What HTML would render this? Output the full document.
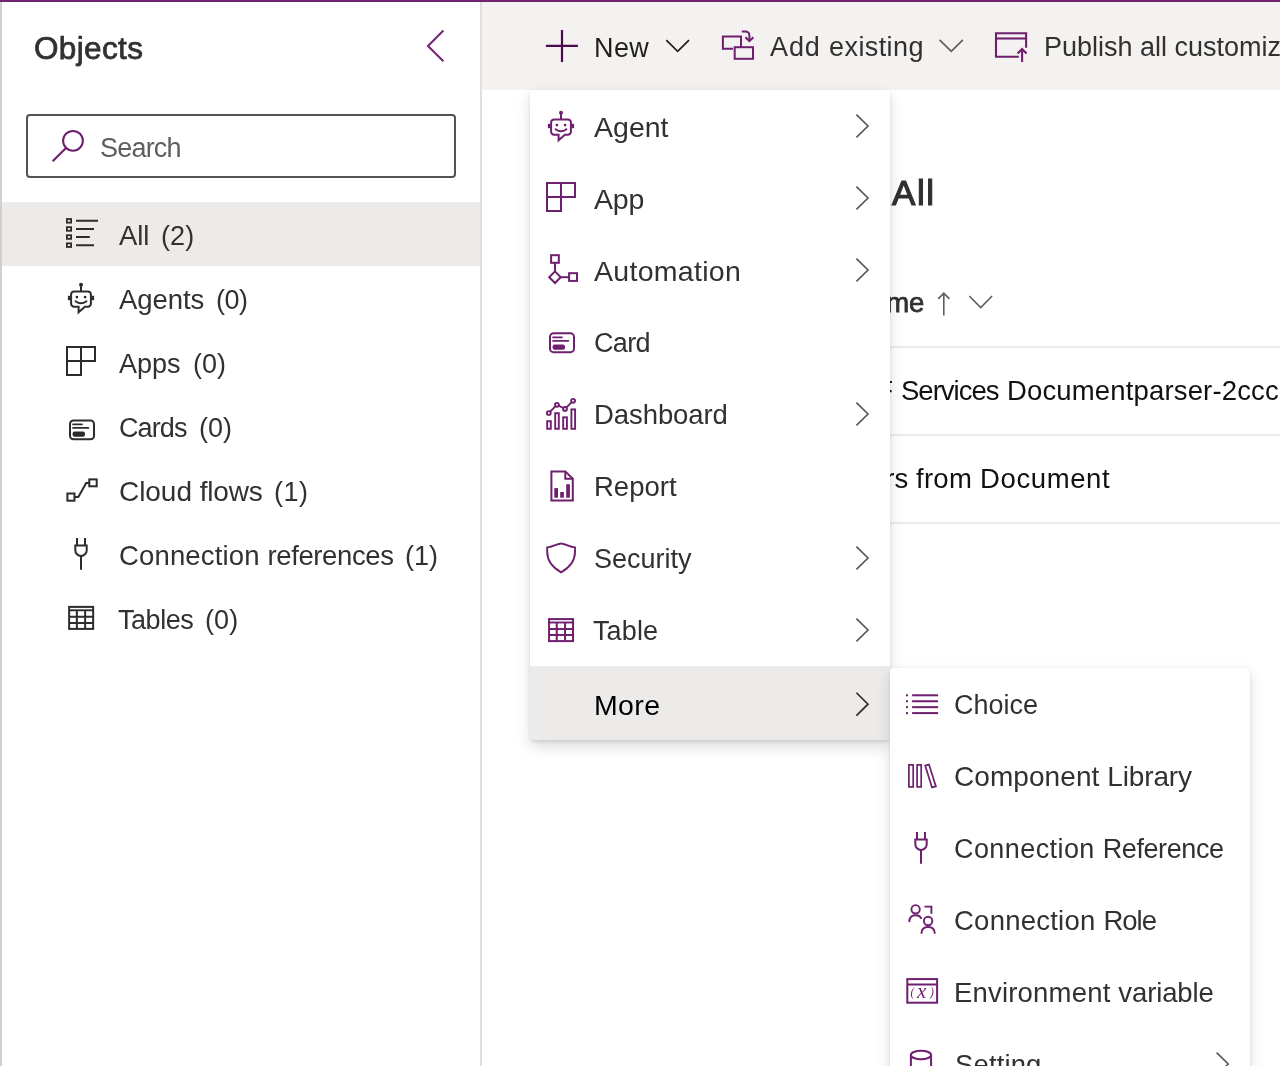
<!DOCTYPE html>
<html lang="en">
<head>
<meta charset="utf-8">
<title>Objects</title>
<style>
html,body{margin:0;padding:0;}
body{width:1280px;height:1066px;overflow:hidden;background:#fff;position:relative;
  font-family:"Liberation Sans",sans-serif;color:#323130;font-size:27px;}
*{box-sizing:border-box;}
svg{position:absolute;overflow:visible;}
.topbar{position:absolute;left:0;top:0;width:1280px;height:2px;background:linear-gradient(#762a76,#6a196a);z-index:50;}
.leftedge{position:absolute;left:0;top:2px;width:2px;height:1064px;background:#d2d0ce;}
.sidebar{position:absolute;left:2px;top:2px;width:480px;height:1064px;background:#fff;border-right:2px solid #e1dfdd;}
.toolbar{position:absolute;left:482px;top:2px;width:798px;height:88px;background:#f3f2f1;overflow:hidden;}
.content{position:absolute;left:482px;top:90px;width:798px;height:976px;background:#fff;overflow:hidden;}
.t{position:absolute;white-space:pre;line-height:32px;height:32px;will-change:transform;}
.search{position:absolute;left:24px;top:112px;width:430px;height:64px;border:2px solid #55534f;border-radius:4px;background:#fff;}
.navsel{position:absolute;left:0;top:200px;width:478px;height:64px;background:#edebe9;}
.nav{list-style:none;margin:0;padding:0;}
.nav li{margin:0;padding:0;}
.menu{position:absolute;background:#fff;box-shadow:0 6.4px 14.4px rgba(0,0,0,.132),0 1.2px 3.6px rgba(0,0,0,.108);border-radius:4px;}
.menu ul{list-style:none;margin:0;padding:0;}
.hl{position:absolute;background:#edebe9;}
.rowline{position:absolute;left:64px;width:734px;height:2px;background:#edebe9;}
.cnt{color:#323130;}
</style>
</head>
<body>
<div class="topbar"></div>
<div class="leftedge"></div>

<div class="sidebar">
<span class="t title" style="left:32.06px;top:29.89px;font-size:31.5px;font-weight:400;-webkit-text-stroke:0.75px;letter-spacing:0.36px;">Objects</span>
<svg width="32" height="40" viewBox="420 26 32 40" style="left:418px;top:24px;"><path d="M443.4 30.6 L428 45.9 L443.4 61.2" fill="none" stroke="#742774" stroke-width="2.1"/></svg>
<div class="search">
<svg width="40" height="40" viewBox="48 126 40 40" style="left:20px;top:10px;"><circle cx="73" cy="140.8" r="9.9" fill="none" stroke="#6e1f6e" stroke-width="2"/><path d="M66 147.9 L52.6 161.2" stroke="#6e1f6e" stroke-width="2.1" fill="none"/></svg>
<span class="t" style="left:72.25px;top:15.54px;color:#605e5c;letter-spacing:-0.8px;">Search</span>
</div>
<div class="navsel"></div>
<ul class="nav">
<li><svg width="36" height="36" viewBox="64 216 36 36" style="left:62px;top:214px;"><g fill="none" stroke="#2d2c2b" stroke-width="2"><rect x="66.9" y="219.05" width="4.2" height="3.6" stroke-width="1.8"/><rect x="66.9" y="227.15" width="4.2" height="3.6" stroke-width="1.8"/><rect x="66.9" y="235.25" width="4.2" height="3.6" stroke-width="1.8"/><rect x="66.9" y="243.35" width="4.2" height="3.6" stroke-width="1.8"/><path d="M76 220.85 H98 M76 228.95 H94 M76 237.05 H89.8 M76 245.15 H94"/></g></svg><span class="t" style="left:116.75px;top:217.67px;font-size:27.5px;letter-spacing:-0.08px;">All</span><span class="t cnt" style="left:159.30px;top:217.84px;letter-spacing:0.1px;">(2)</span></li>
<li><svg width="36" height="36" viewBox="64 280 36 36" style="left:62px;top:278px;"><g transform="translate(81 298)" fill="none" stroke="#2d2c2b" stroke-width="2"><circle cx="0" cy="-13.3" r="2" fill="#2d2c2b" stroke="none"/><path d="M0 -13 V-6.6"/><path d="M-6.9 -6.6 H6.9 a3 3 0 0 1 3 3 V5.7 a3 3 0 0 1 -3 3 H3.9 L-2.4 14.2 V8.7 H-6.9 a3 3 0 0 1 -3 -3 V-3.6 a3 3 0 0 1 3 -3 Z" stroke-linejoin="miter"/><rect x="-13.1" y="-2.2" width="2.6" height="4.4" fill="#2d2c2b" stroke="none"/><rect x="10.5" y="-2.2" width="2.6" height="4.4" fill="#2d2c2b" stroke="none"/><circle cx="-4.1" cy="-0.9" r="1.35" fill="#2d2c2b" stroke="none"/><circle cx="4.1" cy="-0.9" r="1.35" fill="#2d2c2b" stroke="none"/><path d="M-5.4 3.2 Q0 7.4 5.4 3.2" stroke-width="1.9" stroke-linecap="round"/></g></svg><span class="t" style="left:116.75px;top:281.67px;font-size:27.5px;letter-spacing:-0.07px;">Agents</span><span class="t cnt" style="left:214.00px;top:281.84px;letter-spacing:-0.5px;">(0)</span></li>
<li><svg width="36" height="36" viewBox="64 344 36 36" style="left:62px;top:342px;"><g transform="translate(81 361)" fill="none" stroke="#2d2c2b" stroke-width="2"><path d="M-14 -14 H14 V0 H0 V14 H-14 Z M0 -14 V0 M-14 0 H0"/></g></svg><span class="t" style="left:116.75px;top:345.84px;letter-spacing:-0.02px;">Apps</span><span class="t cnt" style="left:190.50px;top:345.84px;letter-spacing:-0.05px;">(0)</span></li>
<li><svg width="36" height="36" viewBox="64 408 36 36" style="left:62px;top:406px;"><g transform="translate(82 429.8)" fill="none" stroke="#2d2c2b" stroke-width="2"><rect x="-12" y="-9.4" width="24" height="18.8" rx="3.5"/><path d="M-9 -5.4 H0" stroke-width="1.7" stroke-linecap="round"/><path d="M-9 -1.9 H6.4" stroke-width="1.7" stroke-linecap="round"/><rect x="-9.4" y="1.8" width="12.4" height="5.2" rx="2" fill="#2d2c2b" stroke="none"/></g></svg><span class="t" style="left:116.50px;top:409.84px;letter-spacing:-0.88px;">Cards</span><span class="t cnt" style="left:196.80px;top:409.84px;letter-spacing:-0.05px;">(0)</span></li>
<li><svg width="36" height="36" viewBox="64 472 36 36" style="left:62px;top:470px;"><g fill="none" stroke="#2d2c2b" stroke-width="2"><rect x="67.4" y="493.5" width="7.1" height="7.2"/><rect x="89.3" y="479.4" width="7.4" height="6.9"/><path d="M74.5 497 H78.3 L86.2 483 H89.3"/></g></svg><span class="t" style="left:116.50px;top:473.50px;font-size:28px;letter-spacing:-0.05px;">Cloud <span style="letter-spacing:-0.15px;">flows</span></span><span class="t cnt" style="left:271.60px;top:473.84px;letter-spacing:0.5px;">(1)</span></li>
<li><svg width="36" height="36" viewBox="64 536 36 36" style="left:62px;top:534px;"><g transform="translate(81 538)" fill="none" stroke="#2d2c2b" stroke-width="2"><path d="M-4 0 V7.4 M4 0 V7.4"/><path d="M-5.7 7.4 H5.7 V12.2 a5.7 5.7 0 0 1 -11.4 0 Z"/><path d="M0 17.9 V31.7"/></g></svg><span class="t" style="left:116.50px;top:537.67px;font-size:27.5px;letter-spacing:0.15px;">Connection <span style="letter-spacing:-0.37px;">references</span></span><span class="t cnt" style="left:403.40px;top:537.84px;letter-spacing:0.05px;">(1)</span></li>
<li><svg width="36" height="36" viewBox="64 600 36 36" style="left:62px;top:598px;"><g transform="translate(81.15 617.9)" fill="none" stroke="#2d2c2b" stroke-width="2"><rect x="-12" y="-11" width="24" height="22"/><path d="M-12 -7.6 H12" stroke-width="1.9"/><path d="M-12 -1.2 H12 M-12 5 H12 M-4.3 -7.6 V11 M4 -7.6 V11"/></g></svg><span class="t" style="left:115.75px;top:601.84px;letter-spacing:-0.45px;">Tables</span><span class="t cnt" style="left:203.00px;top:601.84px;letter-spacing:0.12px;">(0)</span></li>
</ul>
</div>
<div class="toolbar">
<svg width="36" height="36" viewBox="544 28 36 36" style="left:62px;top:26px;"><path d="M545.9 45.9 H577.9 M562 30 V61.9" fill="none" stroke="#4b0c4f" stroke-width="2.2"/></svg>
<span class="t" style="left:112.25px;top:29.54px;color:#201f1e;letter-spacing:0.38px;">New</span>
<svg width="28" height="20" viewBox="664 36 28 20" style="left:182px;top:34px;"><path d="M666.3 40.2 L677.65 51.3 L689 40.2" fill="none" stroke="#201f1e" stroke-width="1.7"/></svg>
<svg width="36" height="34" viewBox="720 28 36 34" style="left:238px;top:26px;"><g fill="none" stroke="#6e1f6e" stroke-width="2"><path d="M741 47 V36.6 H722.9 V48.8 H733"/><rect x="734.7" y="47.2" width="18.3" height="11.6"/><path d="M741.8 31.4 H745.4 a4 4 0 0 1 4 4 V40.6"/><path d="M745.4 37.2 L749.4 41.2 L753.4 37.2"/></g></svg>
<span class="t" style="left:288.30px;top:29.34px;letter-spacing:0.88px;">Add <span style="letter-spacing:0.40px;">existing</span></span>
<svg width="30" height="20" viewBox="936 36 30 20" style="left:454px;top:34px;"><path d="M939.6 39.9 L951.25 51.4 L962.9 39.9" fill="none" stroke="#605e5c" stroke-width="1.7"/></svg>
<svg width="36" height="34" viewBox="994 30 36 34" style="left:512px;top:28px;"><g fill="none" stroke="#6e1f6e" stroke-width="2.1"><path d="M1018.8 56.8 H996 V33.2 H1026.1 V47.7"/><path d="M996 38.5 H1026.1"/><path d="M1022.1 61.9 V49.4 M1017.6 53.5 L1022.1 48.9 L1026.6 53.5"/></g></svg>
<span class="t" style="left:561.60px;top:29.34px;">Publish all customizations</span>
</div>
<div class="content">
<span class="t" style="left:410.40px;top:86.87px;font-size:35px;font-weight:400;-webkit-text-stroke:1.15px;letter-spacing:1.6px;line-height:40px;height:40px;margin-top:-4px;">All</span>
<span class="t" style="left:368.90px;top:196.77px;font-size:27.5px;font-weight:400;-webkit-text-stroke:0.75px;">Name</span>
<svg width="64" height="32" viewBox="934 288 64 32" style="left:452px;top:198px;"><path d="M943.8 315.5 V293.2 M938.2 298.9 L943.8 293.2 L949.4 298.9" fill="none" stroke="#605e5c" stroke-width="1.6"/><path d="M969.3 296 L980.7 307.5 L992.1 296" fill="none" stroke="#605e5c" stroke-width="1.6"/></svg>
<div class="rowline" style="top:256px;"></div>
<div class="rowline" style="top:344px;"></div>
<div class="rowline" style="top:432px;"></div>
<span class="t" style="left:269.00px;top:285.17px;font-size:27.5px;color:#111;">Adobe PDF</span>
<span class="t" style="left:418.70px;top:285.17px;font-size:27.5px;color:#111;letter-spacing:-0.99px;">Services </span>
<span class="t" style="left:525.00px;top:285.17px;font-size:27.5px;color:#111;letter-spacing:0.15px;">Documentparser-2ccce</span>
<span class="t" style="left:229.00px;top:373.27px;font-size:27.5px;color:#111;">Extract Headers</span>
<span class="t" style="left:434.10px;top:373.27px;font-size:27.5px;color:#111;letter-spacing:0.28px;">from <span style="letter-spacing:0.60px;">Document</span></span>
</div>
<div class="menu" style="left:530px;top:90px;width:360px;height:650px;">
<div class="hl" style="left:0;top:576px;width:360px;height:74px;border-radius:0 0 4px 4px;"></div>
<ul>
<li><svg width="36" height="40" viewBox="544 106 36 40" style="left:14px;top:16px;"><g transform="translate(561 126)" fill="none" stroke="#6e1f6e" stroke-width="2"><circle cx="0" cy="-13.3" r="2" fill="#6e1f6e" stroke="none"/><path d="M0 -13 V-6.6"/><path d="M-6.9 -6.6 H6.9 a3 3 0 0 1 3 3 V5.7 a3 3 0 0 1 -3 3 H3.9 L-2.4 14.2 V8.7 H-6.9 a3 3 0 0 1 -3 -3 V-3.6 a3 3 0 0 1 3 -3 Z" stroke-linejoin="miter"/><rect x="-13.1" y="-2.2" width="2.6" height="4.4" fill="#6e1f6e" stroke="none"/><rect x="10.5" y="-2.2" width="2.6" height="4.4" fill="#6e1f6e" stroke="none"/><circle cx="-4.1" cy="-0.9" r="1.35" fill="#6e1f6e" stroke="none"/><circle cx="4.1" cy="-0.9" r="1.35" fill="#6e1f6e" stroke="none"/><path d="M-5.4 3.2 Q0 7.4 5.4 3.2" stroke-width="1.9" stroke-linecap="round"/></g></svg><span class="t" style="left:64.06px;top:20.87px;font-size:28.5px;letter-spacing:0.01px;">Agent</span><svg width="20" height="28" viewBox="852 112 20 28" style="left:322px;top:22px;"><path d="M856.4 114.6 L868.0 126 L856.4 137.4" fill="none" stroke="#5d5b58" stroke-width="1.7"/></svg></li>
<li><svg width="36" height="40" viewBox="544 178 36 40" style="left:14px;top:88px;"><g transform="translate(561 196.9)" fill="none" stroke="#6e1f6e" stroke-width="2"><path d="M-14 -14 H14 V0 H0 V14 H-14 Z M0 -14 V0 M-14 0 H0"/></g></svg><span class="t" style="left:64.40px;top:92.87px;font-size:28.5px;letter-spacing:-0.15px;">App</span><svg width="20" height="28" viewBox="852 184 20 28" style="left:322px;top:94px;"><path d="M856.4 186.6 L868.0 198 L856.4 209.4" fill="none" stroke="#5d5b58" stroke-width="1.7"/></svg></li>
<li><svg width="36" height="40" viewBox="544 250 36 40" style="left:14px;top:160px;"><g fill="none" stroke="#6e1f6e" stroke-width="2"><rect x="551.1" y="255.2" width="7.7" height="7.6"/><path d="M555 262.8 V271.4"/><path d="M555 271.4 L560.7 277.2 L555 283 L549.2 277.2 Z"/><path d="M560.7 277.2 H569.1"/><rect x="569.1" y="273.2" width="7.9" height="7.7"/></g></svg><span class="t" style="left:64.40px;top:164.87px;font-size:28.5px;letter-spacing:0.29px;">Automation</span><svg width="20" height="28" viewBox="852 256 20 28" style="left:322px;top:166px;"><path d="M856.4 258.6 L868.0 270 L856.4 281.4" fill="none" stroke="#5d5b58" stroke-width="1.7"/></svg></li>
<li><svg width="36" height="40" viewBox="544 322 36 40" style="left:14px;top:232px;"><g transform="translate(562 342.75)" fill="none" stroke="#6e1f6e" stroke-width="2"><rect x="-12" y="-9.4" width="24" height="18.8" rx="3.5"/><path d="M-9 -5.4 H0" stroke-width="1.7" stroke-linecap="round"/><path d="M-9 -1.9 H6.4" stroke-width="1.7" stroke-linecap="round"/><rect x="-9.4" y="1.8" width="12.4" height="5.2" rx="2" fill="#6e1f6e" stroke="none"/></g></svg><span class="t" style="left:64.30px;top:237.39px;letter-spacing:-0.63px;">Card</span></li>
<li><svg width="36" height="40" viewBox="544 394 36 40" style="left:14px;top:304px;"><g fill="none" stroke="#6e1f6e" stroke-width="1.9"><rect x="547.2" y="421.2" width="3.6" height="7.6"/><rect x="555.2" y="413.2" width="3.6" height="15.6"/><rect x="563.2" y="417.3" width="3.7" height="11.5"/><rect x="571.4" y="409.4" width="3.7" height="19.4"/><circle cx="548.8" cy="413" r="1.9"/><circle cx="556.9" cy="404.8" r="1.9"/><circle cx="565" cy="408.9" r="1.9"/><circle cx="573.1" cy="400.8" r="1.9"/><path d="M550.2 411.6 L555.5 406.2 M558.7 405.7 L563.2 408 M566.5 407.4 L571.7 402.2"/></g></svg><span class="t" style="left:63.90px;top:309.22px;font-size:27.5px;letter-spacing:-0.08px;">Dashboard</span><svg width="20" height="28" viewBox="852 400 20 28" style="left:322px;top:310px;"><path d="M856.4 402.6 L868.0 414 L856.4 425.4" fill="none" stroke="#5d5b58" stroke-width="1.7"/></svg></li>
<li><svg width="36" height="40" viewBox="544 466 36 40" style="left:14px;top:376px;"><g fill="none" stroke="#6e1f6e" stroke-width="2"><path d="M565.3 471.4 H551.4 V500.6 H572.8 V478.7 Z"/><path d="M565.3 471.4 V478.7 H572.8"/></g><g fill="#6e1f6e"><rect x="554.3" y="488.1" width="3.7" height="9.6"/><rect x="560.2" y="492" width="3.7" height="5.7"/><rect x="566.2" y="484.2" width="3.7" height="13.5"/></g></svg><span class="t" style="left:63.90px;top:381.22px;font-size:27.5px;letter-spacing:0.0px;">Report</span></li>
<li><svg width="36" height="40" viewBox="544 538 36 40" style="left:14px;top:448px;"><path d="M547.2 547.4 C552.6 547.4 557.2 543.5 561.1 543.5 C565 543.5 569.6 547.4 575 547.4 V552 C575 561.5 569.5 567.5 561.1 572.4 C552.7 567.5 547.2 561.5 547.2 552 Z" fill="none" stroke="#6e1f6e" stroke-width="1.9" stroke-linejoin="miter"/></svg><span class="t" style="left:64.00px;top:453.39px;letter-spacing:0.0px;">Security</span><svg width="20" height="28" viewBox="852 544 20 28" style="left:322px;top:454px;"><path d="M856.4 546.6 L868.0 558 L856.4 569.4" fill="none" stroke="#5d5b58" stroke-width="1.7"/></svg></li>
<li><svg width="36" height="40" viewBox="544 610 36 40" style="left:14px;top:520px;"><g transform="translate(561.05 630.1)" fill="none" stroke="#6e1f6e" stroke-width="2"><rect x="-12" y="-11" width="24" height="22"/><path d="M-12 -7.6 H12" stroke-width="1.9"/><path d="M-12 -1.2 H12 M-12 5 H12 M-4.3 -7.6 V11 M4 -7.6 V11"/></g></svg><span class="t" style="left:63.40px;top:525.39px;letter-spacing:0.12px;">Table</span><svg width="20" height="28" viewBox="852 616 20 28" style="left:322px;top:526px;"><path d="M856.4 618.6 L868.0 630 L856.4 641.4" fill="none" stroke="#5d5b58" stroke-width="1.7"/></svg></li>
<li><span class="t" style="left:63.60px;top:598.62px;font-size:28.5px;color:#000;letter-spacing:0.38px;">More</span><svg width="20" height="28" viewBox="852 689.6 20 28" style="left:322px;top:599.6px;"><path d="M856.4 692.35 L868.0 703.75 L856.4 715.15" fill="none" stroke="#2f2e2d" stroke-width="1.7"/></svg></li>
</ul></div>
<div class="menu" style="left:890px;top:668px;width:360px;height:440px;">
<ul>
<li><svg width="36" height="40" viewBox="904 685 36 40" style="left:14px;top:17px;"><g fill="#6e1f6e"><rect x="906" y="694.30" width="2" height="2"/><rect x="912.1" y="694.30" width="26" height="2"/><rect x="906" y="700.23" width="2" height="2"/><rect x="912.1" y="700.23" width="26" height="2"/><rect x="906" y="706.16" width="2" height="2"/><rect x="912.1" y="706.16" width="26" height="2"/><rect x="906" y="712.09" width="2" height="2"/><rect x="912.1" y="712.09" width="26" height="2"/></g></svg><span class="t" style="left:64.25px;top:21.39px;letter-spacing:0.01px;">Choice</span></li>
<li><svg width="36" height="40" viewBox="904 757 36 40" style="left:14px;top:89px;"><g fill="none" stroke="#6e1f6e" stroke-width="1.7"><rect x="908.9" y="764.9" width="4.3" height="22"/><rect x="917.1" y="764.9" width="4.1" height="22"/><path d="M925.2 765.6 L929 764.6 L935.9 786.4 L932 787.4 Z"/></g></svg><span class="t" style="left:64.25px;top:93.05px;font-size:28px;letter-spacing:0.07px;">Component <span style="letter-spacing:-0.13px;">Library</span></span></li>
<li><svg width="36" height="40" viewBox="904 829 36 40" style="left:14px;top:161px;"><g transform="translate(921 832.1)" fill="none" stroke="#6e1f6e" stroke-width="2"><path d="M-4 0 V7.4 M4 0 V7.4"/><path d="M-5.7 7.4 H5.7 V12.2 a5.7 5.7 0 0 1 -11.4 0 Z"/><path d="M0 17.9 V31.7"/></g></svg><span class="t" style="left:64.25px;top:165.39px;letter-spacing:0.42px;">Connection <span style="letter-spacing:-0.41px;">Reference</span></span></li>
<li><svg width="36" height="40" viewBox="904 901 36 40" style="left:14px;top:233px;"><g fill="none" stroke="#6e1f6e" stroke-width="1.9"><circle cx="915.6" cy="909.3" r="4.2"/><path d="M909.3 922 C909.3 917.6 912 915.3 915.6 915.3 C918.2 915.3 920.4 916.6 921.6 918.8"/><circle cx="928.1" cy="921" r="4.2"/><path d="M921.4 933.8 C921.4 929.6 924 927 928.1 927 C932.2 927 934.8 929.6 934.8 933.8"/><path d="M924.4 906.6 H931.4 V913.8"/></g></svg><span class="t" style="left:64.25px;top:237.22px;font-size:27.5px;letter-spacing:0.24px;">Connection <span style="letter-spacing:-0.97px;">Role</span></span></li>
<li><svg width="36" height="40" viewBox="904 973 36 40" style="left:14px;top:305px;"><g fill="none" stroke="#6e1f6e" stroke-width="2"><rect x="907.3" y="979.1" width="29.8" height="23.6"/><path d="M907.3 984.5 H937.1"/></g><g font-family="Liberation Serif, serif" font-style="italic" fill="#6e1f6e"><text x="910.6" y="996.2" font-size="11.5">(</text><text x="917" y="997.6" font-size="21">x</text><text x="929.9" y="996.2" font-size="11.5">)</text></g></svg><span class="t" style="left:64.25px;top:309.22px;font-size:27.5px;letter-spacing:0.19px;">Environment <span style="letter-spacing:-0.11px;">variable</span></span></li>
<li><svg width="36" height="40" viewBox="904 1045 36 40" style="left:14px;top:377px;"><g fill="none" stroke="#6e1f6e" stroke-width="2"><ellipse cx="921" cy="1055" rx="10.1" ry="4.3"/><path d="M910.9 1055 V1075 M931.1 1055 V1075"/></g></svg><span class="t" style="left:64.60px;top:381.22px;font-size:27.5px;letter-spacing:0.12px;">Setting</span><svg width="20" height="28" viewBox="1212 1051 20 28" style="left:322px;top:383px;"><path d="M1216.6 1052.6 L1228.1999999999998 1064 L1216.6 1075.4" fill="none" stroke="#5d5b58" stroke-width="1.7"/></svg></li>
</ul></div>
</body>
</html>
